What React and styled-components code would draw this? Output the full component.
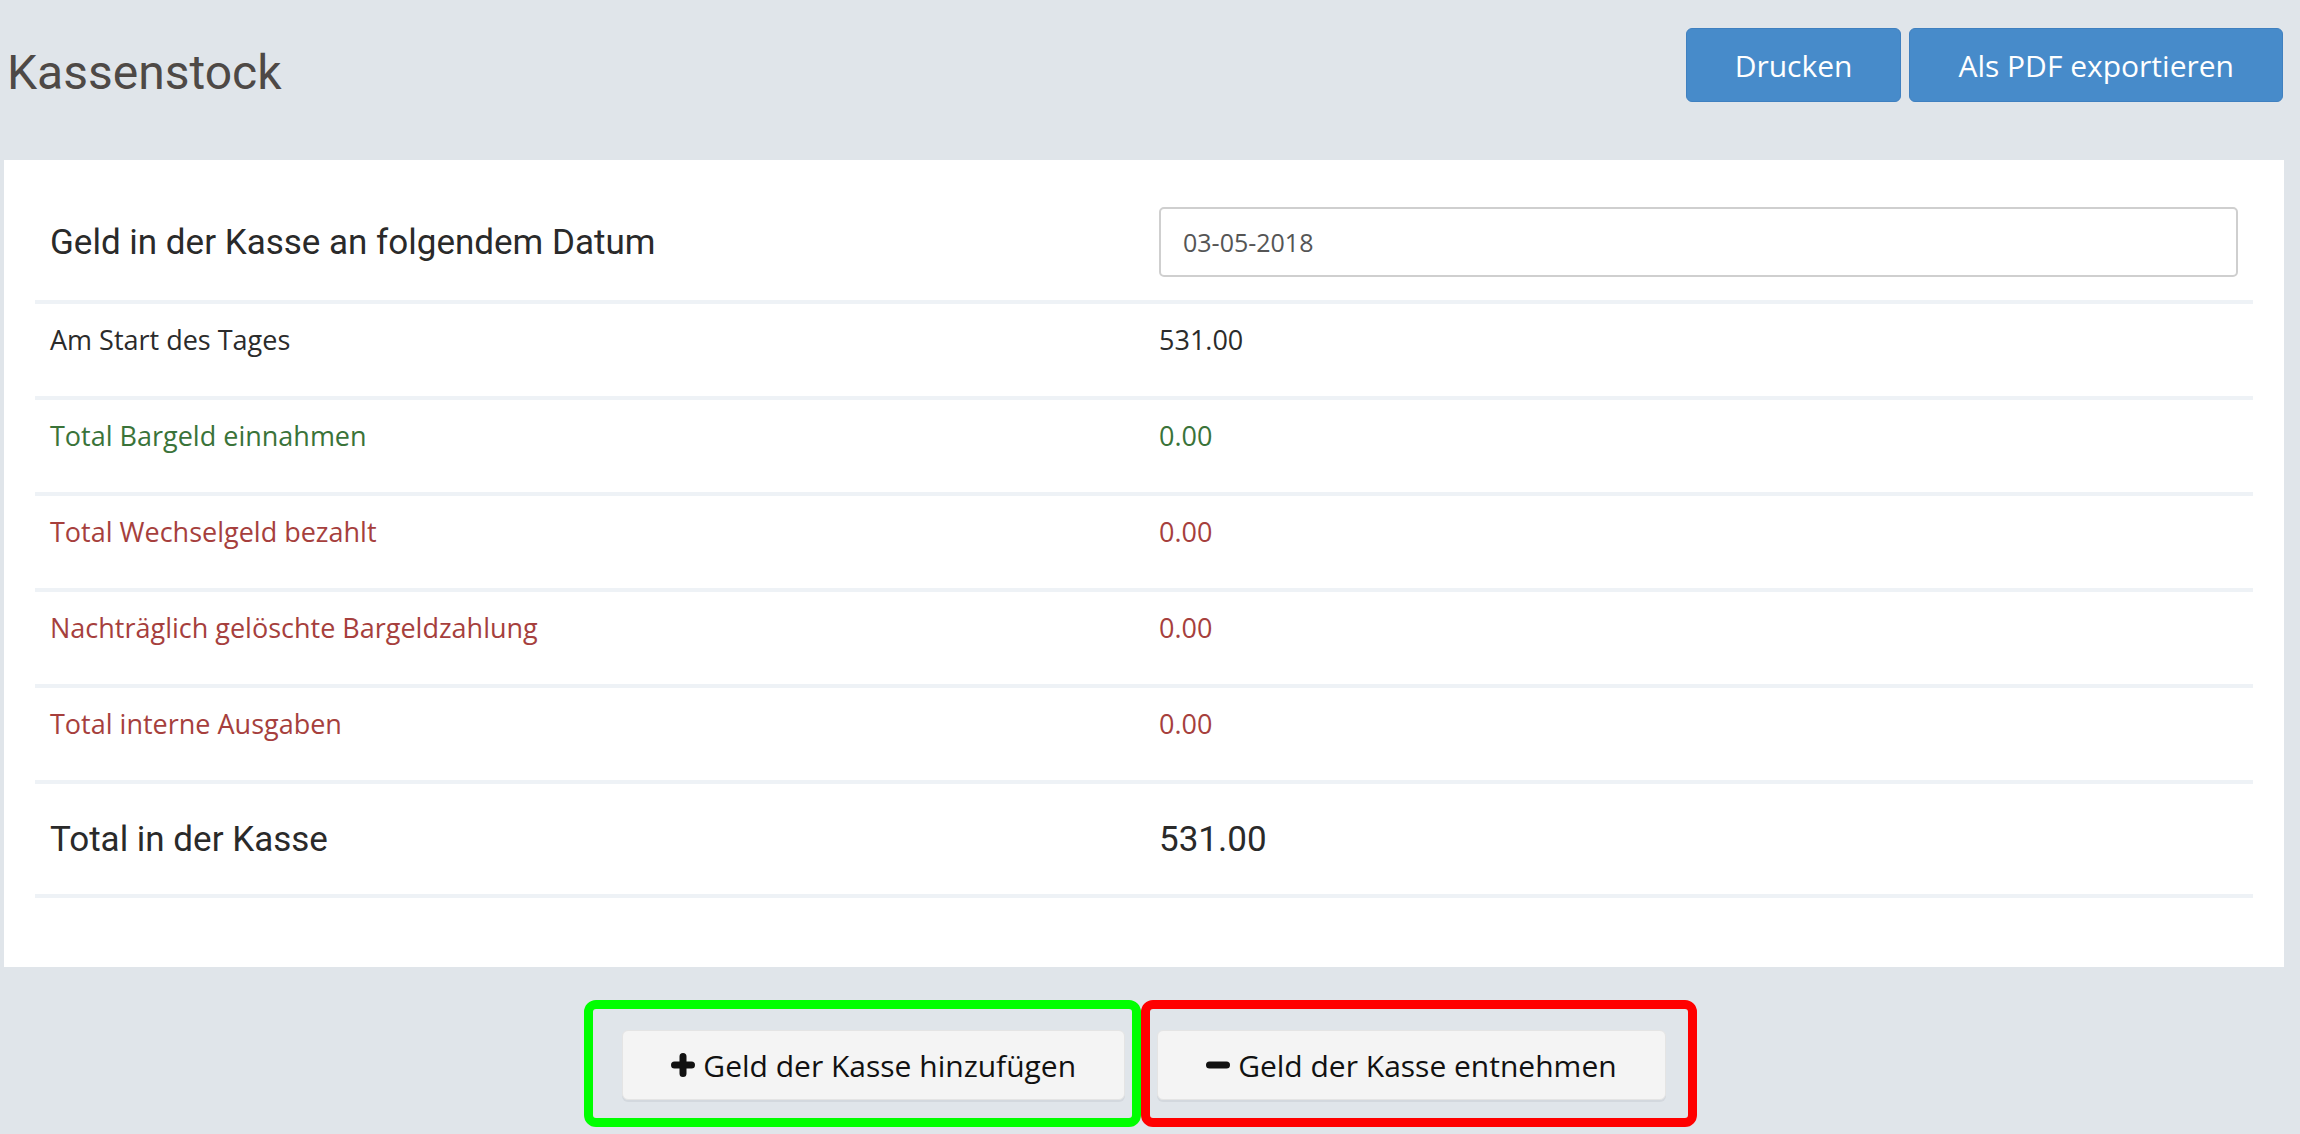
import React from "react";
import styled, { createGlobalStyle } from "styled-components";

const GlobalStyle = createGlobalStyle`
  html, body {
    margin: 0;
    padding: 0;
    background: #e0e5ea;
  }
  body {
    font-family: "Open Sans", "Liberation Sans", sans-serif;
    color: #333;
  }
  * {
    box-sizing: border-box;
  }
`;

const rows = [
  { label: "Am Start des Tages", value: "531.00", tone: "plain" },
  { label: "Total Bargeld einnahmen", value: "0.00", tone: "income" },
  { label: "Total Wechselgeld bezahlt", value: "0.00", tone: "expense" },
  { label: "Nachträglich gelöschte Bargeldzahlung", value: "0.00", tone: "expense" },
  { label: "Total interne Ausgaben", value: "0.00", tone: "expense" },
];

const tones = {
  plain: "#2b2b2b",
  income: "#3a7339",
  expense: "#a63f3d",
};

const App = () => {
  return (
    <Page>
      <GlobalStyle />
      <Header>
        <Title>Kassenstock</Title>
        <Actions>
          <PrimaryButton>Drucken</PrimaryButton>
          <PrimaryButton>Als PDF exportieren</PrimaryButton>
        </Actions>
      </Header>

      <Panel>
        <HeadRow>
          <Cell>
            <Heading>Geld in der Kasse an folgendem Datum</Heading>
          </Cell>
          <Cell>
            <DateInput type="text" defaultValue="03-05-2018" />
          </Cell>
        </HeadRow>

        {rows.map((r) => (
          <Row key={r.label} tone={r.tone}>
            <Cell>{r.label}</Cell>
            <Cell>{r.value}</Cell>
          </Row>
        ))}

        <TotalRow>
          <Cell>
            <Heading>Total in der Kasse</Heading>
          </Cell>
          <Cell>
            <Heading>531.00</Heading>
          </Cell>
        </TotalRow>
      </Panel>

      <Footer>
        <Mark color="#00ff00" pad="21px 7px 18px 29px">
          <CashButton>
            <svg width="24" height="24" viewBox="0 0 24 24">
              <path d="M12 3.5v17M3.5 12h17" stroke="#111" strokeWidth="7" strokeLinecap="round" />
            </svg>
            Geld der Kasse hinzufügen
          </CashButton>
        </Mark>
        <Mark color="#ff0000" pad="21px 22px 18px 7px">
          <CashButton>
            <svg width="24" height="24" viewBox="0 0 24 24">
              <path d="M3.5 12h17" stroke="#111" strokeWidth="7" strokeLinecap="round" />
            </svg>
            Geld der Kasse entnehmen
          </CashButton>
        </Mark>
      </Footer>
    </Page>
  );
};

// Styling Info
const Page = styled.div`
  padding: 0 16px 0 4px;
  height: 1134px;
`;

const Header = styled.header`
  display: flex;
  justify-content: space-between;
  align-items: flex-start;
  height: 160px;
  padding-left: 3px;
`;

const Title = styled.h1`
  margin: 0;
  padding-top: 45px;
  font-family: Roboto, "Liberation Sans", sans-serif;
  font-weight: 400;
  font-size: 48px;
  line-height: 56px;
  color: #4e4946;
`;

const Actions = styled.div`
  display: flex;
  gap: 8px;
  margin-top: 28px;
  margin-right: 1px;
`;

const PrimaryButton = styled.button`
  height: 74px;
  padding: 0 48px;
  background: #478bca;
  border: 1px solid #3f80c0;
  border-radius: 6px;
  color: #fff;
  font-family: "Open Sans", "Liberation Sans", sans-serif;
  font-size: 30px;
  cursor: pointer;
`;

const Panel = styled.section`
  background: #fff;
  padding: 27px 31px 69px;
`;

const BaseRow = styled.div`
  display: grid;
  grid-template-columns: 1fr 1fr;
  border-bottom: 4px solid #eef2f6;
`;

const HeadRow = styled(BaseRow)`
  align-items: center;
  padding: 20px 0 23px;
`;

const Row = styled(BaseRow)`
  padding: 17px 0 38px;
  font-size: 27px;
  font-weight: 400;
  line-height: 37px;
  color: ${(p) => tones[p.tone]};
`;

const TotalRow = styled(BaseRow)`
  align-items: center;
  height: 114px;
`;

const Cell = styled.div`
  padding: 0 15px;
`;

const Heading = styled.div`
  font-family: Roboto, "Liberation Sans", sans-serif;
  font-size: 35px;
  line-height: 41px;
  color: #2a2a2a;
`;

const DateInput = styled.input`
  display: block;
  width: 100%;
  height: 70px;
  padding: 0 22px;
  border: 2px solid #cfcfcf;
  border-radius: 5px;
  font-family: "Open Sans", "Liberation Sans", sans-serif;
  font-size: 25px;
  font-weight: 400;
  color: #555;
  outline: none;
`;

const Footer = styled.footer`
  display: flex;
  justify-content: center;
  padding: 33px 7px 0 0;
`;

const Mark = styled.div`
  border: 9px solid ${(p) => p.color};
  border-radius: 12px;
  padding: ${(p) => p.pad};
`;

const CashButton = styled.button`
  display: flex;
  align-items: center;
  gap: 8px;
  height: 70px;
  padding: 0 48px;
  background: #f4f4f4;
  border: 1px solid #e4e4e4;
  border-radius: 6px;
  box-shadow: 0 2px 0 #d3d8de;
  color: #111;
  font-family: "Open Sans", "Liberation Sans", sans-serif;
  font-size: 30px;
  cursor: pointer;
`;

export default App;
